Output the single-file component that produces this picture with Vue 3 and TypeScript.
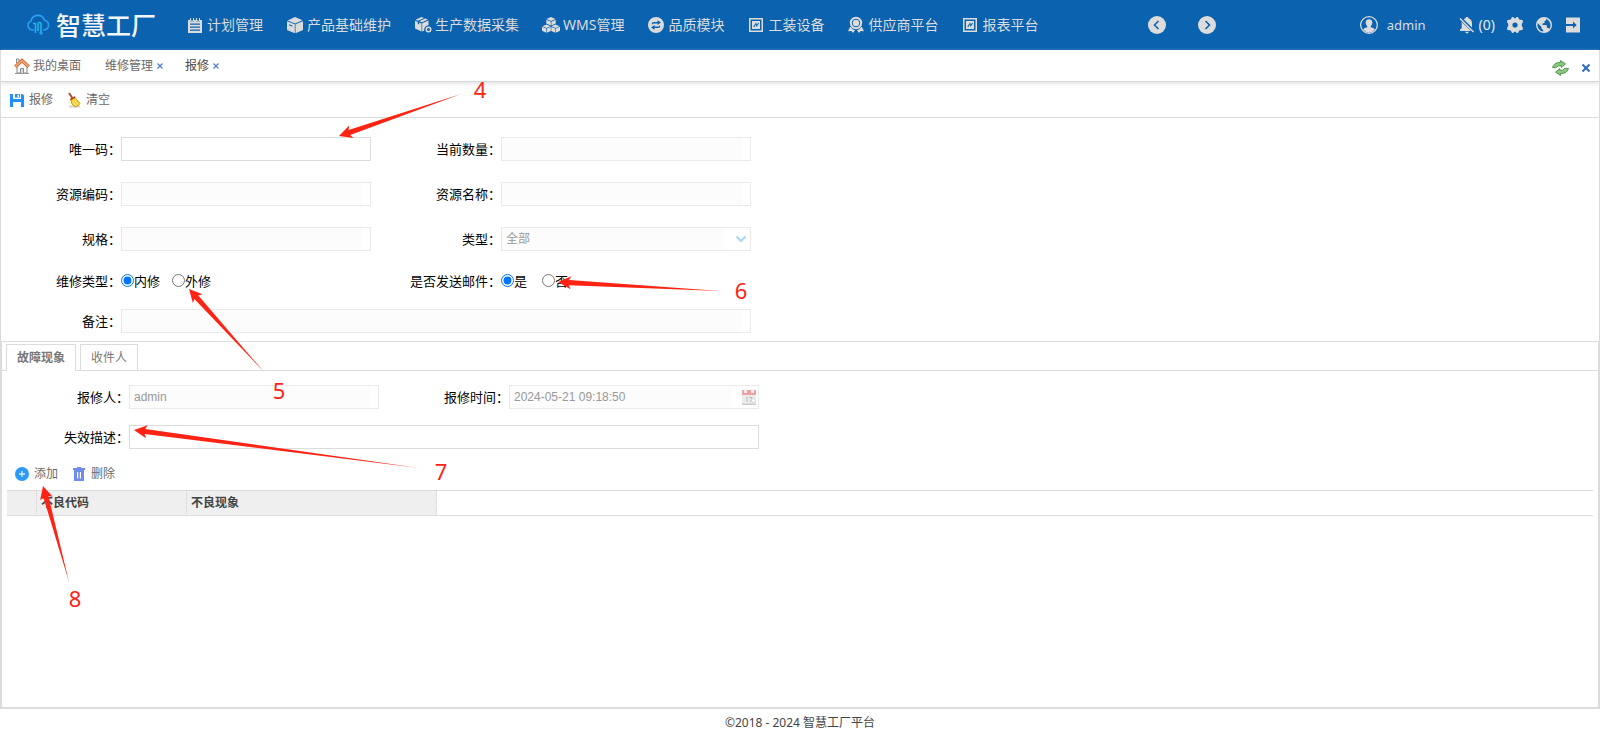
<script setup lang="ts">
import { ref } from 'vue'

interface NavItem { label: string; icon: string }

const frameIcon = 'M2 2H16V16H2ZM3.5 3.5V14.5H14.5V3.5ZM5 5H13V13H5ZM6.3 10.5L7.3 11.2L8.8 8.4L9.6 10.9L12 7.3L11.2 6.7L9.9 8.7L9.1 6.5Z'

const navItems: NavItem[] = [
  { label: '计划管理', icon: 'M2 4H4V5.5H5.5V4H6.5V5.5H8V4H10V5.5H11.5V4H12.5V5.5H14V4H16V17H2ZM4 7.5V8.7H14V7.5ZM4 10.5V11.7H14V10.5ZM4 13.5V14.7H14V13.5ZM4 2H5V5H4ZM7 2H8V5H7ZM10 2H11V5H10ZM13 2H14V5H13Z' },
  { label: '产品基础维护', icon: 'M9 1L16.5 4.3L9.2 7.5L1.5 4.5ZM1 5.2L8.8 8.2V17.3L1 13.9ZM9.5 8.2L17 5.2V13.9L9.5 17.3ZM3 8.3V9.3L6.3 10.7V9.6Z' },
  { label: '生产数据采集', icon: 'M7.5 1L10 2L4 4.8L1.5 3.7ZM11.2 2.4L14 3.6L8 6.3L5.2 5.3ZM1 4.8L3.8 6V8L5.2 8.6V6.5L7.5 7.5V15.5L1 12.6ZM8.2 7.3L14.5 4.6V9.3A4.5 4.5 0 0 0 10.2 14.7L8.2 15.6ZM14.5 10.5A3 3 0 1 1 14.5 16.5A3 3 0 1 1 14.5 10.5ZM14.5 12A1.5 1.5 0 1 0 14.5 15A1.5 1.5 0 1 0 14.5 12Z' },
  { label: 'WMS管理', icon: 'M9 1L13.5 3L9 5L4.5 3ZM4.3 3.7L8.8 5.7V9.5L4.3 7.4ZM9.4 5.7L13.7 3.7V7.4L9.4 9.5ZM4.5 8.4L8.5 10.2L4.5 12L.5 10.2ZM0 10.7L4.2 12.6V16.8L0 14.7ZM4.8 12.6L8.8 10.9V15L4.8 16.8ZM13.5 8.4L17.5 10.2L13.5 12L9.5 10.2ZM9.3 10.9L13.2 12.6V16.8L9.3 15ZM13.8 12.6L18 10.7V14.7L13.8 16.8Z' },
  { label: '品质模块', icon: 'M9 1A8 8 0 1 1 9 17A8 8 0 1 1 9 1ZM4.5 8.3H5.7Q6 7.4 7 7.4H10.5V9L14 6.6L10.5 4.3V6H7Q4.8 6.1 4.5 8.3ZM13.5 9.7H12.3Q12 10.6 11 10.6H7.5V9L4 11.4L7.5 13.7V12H11Q13.2 11.9 13.5 9.7Z' },
  { label: '工装设备', icon: frameIcon },
  { label: '供应商平台', icon: 'M9 .8A6.2 6.2 0 1 1 9 13.2A6.2 6.2 0 1 1 9 .8ZM9 2.8A4.2 4.2 0 1 0 9 11.2A4.2 4.2 0 1 0 9 2.8ZM9 3.8A3.2 3.2 0 1 1 9 10.2A3.2 3.2 0 1 1 9 3.8ZM3.3 10.5Q5 13.6 8 14.2L6 17L4.3 15.1L1 15.2ZM14.7 10.5Q13 13.6 10 14.2L12 17L13.7 15.1L17 15.2Z' },
  { label: '报表平台', icon: frameIcon },
]

const serial = ref('')
const failure = ref('')
const repairType = ref('inner')
const sendMail = ref('yes')

interface Mark { label: string; tip: [number, number]; tail: [number, number]; text: [number, number] }

const marks: Mark[] = [
  { label: '4', tip: [339, 136], tail: [461, 94], text: [480, 98] },
  { label: '5', tip: [189, 289], tail: [264, 372], text: [279, 399] },
  { label: '6', tip: [558, 282], tail: [720, 291], text: [741, 299] },
  { label: '7', tip: [134, 430], tail: [419, 468], text: [441, 480] },
  { label: '8', tip: [43, 486], tail: [69, 582], text: [75, 607] },
]

// Outline of an arrow: barbed head at the tip, body narrowing to a point at the tail.
function arrowPoints(m: Mark): string {
  const dx = m.tail[0] - m.tip[0]
  const dy = m.tail[1] - m.tip[1]
  const len = Math.hypot(dx, dy)
  const ux = dx / len
  const uy = dy / len
  const at = (along: number, side: number) =>
    `${(m.tip[0] + ux * along - uy * side).toFixed(1)},${(m.tip[1] + uy * along + ux * side).toFixed(1)}`
  return [at(0, 0), at(13, 6.5), at(11, 2.6), at(len, 0), at(11, -2.6), at(13, -6.5)].join(' ')
}
</script>

<template>
  <div class="page">
    <header class="topbar">
      <svg class="cloud" viewBox="0 0 24 22" fill="none" stroke="#2b9df4" stroke-width="1.6">
        <path d="M8 16H6A4.7 4.7 0 0 1 5 7A7 7 0 0 1 18.5 6.2A5 5 0 0 1 18.5 16H17" />
        <path d="M7 9.5H9.5V19M12 17V9.8Q12 8.5 13.5 8.5T15 9.8V18" stroke="#1fb4ea" />
        <circle cx="15" cy="19" r="1" />
      </svg>
      <h1>智慧工厂</h1>
      <nav>
        <a v-for="item in navItems" :key="item.label" href="#">
          <svg viewBox="0 0 18 18"><path :d="item.icon" fill-rule="evenodd" /></svg>{{ item.label }}
        </a>
      </nav>
      <div class="pager">
        <button type="button" aria-label="上一页">
          <svg viewBox="0 0 18 18"><circle cx="9" cy="9" r="9" /><path class="cut" d="M10.5 5L6.5 9L10.5 13" /></svg>
        </button>
        <button type="button" aria-label="下一页">
          <svg viewBox="0 0 18 18"><circle cx="9" cy="9" r="9" /><path class="cut" d="M7.5 5L11.5 9L7.5 13" /></svg>
        </button>
      </div>
      <div class="account">
        <a class="user" href="#">
          <svg viewBox="0 0 18 18">
            <path fill-rule="evenodd" d="M9 0A9 9 0 1 1 9 18A9 9 0 1 1 9 0ZM9 1.3A7.7 7.7 0 1 0 9 16.7A7.7 7.7 0 1 0 9 1.3Z" />
            <path d="M9 3.2C13.2 3.2 13 8 10.8 10.1V11.2C13 12 14.6 12.5 15 13.6Q12.4 16.7 9 16.7T3 13.6C3.4 12.5 5 12 7.2 11.2V10.1C5 8 4.8 3.2 9 3.2Z" />
          </svg>admin
        </a>
        <button class="bell" type="button">
          <svg viewBox="0 0 16 18">
            <path d="M4.7 3.3Q6 2.5 6.8 2.3V1H9.2V2.3Q13 3.2 13 7.5V11.5ZM2.7 6L12 15H1V13.8L2.7 12ZM6.3 15.7H9.7Q9.5 17.4 8 17.4T6.3 15.7ZM1.5 2L15 15.5L14 16.5L.5 3Z" />
          </svg>(0)
        </button>
        <button type="button" aria-label="设置">
          <svg viewBox="0 0 18 18"><path fill-rule="evenodd" d="M6 1H7.2L8.4 2.2H9.6L10.8 1H12L13 3.2L14.2 3.8L16.5 4L17 6L15.8 8V10L17 12L16.5 14L14.2 14.2L13 14.8L12 17H10.8L9.6 15.8H8.4L7.2 17H6L5 14.8L3.8 14.2L1.5 14L1 12L2.2 10V8L1 6L1.5 4L3.8 3.8L5 3.2ZM9 6.4A2.6 2.6 0 1 0 9 11.6A2.6 2.6 0 1 0 9 6.4Z" /></svg>
        </button>
        <button type="button" aria-label="语言">
          <svg viewBox="0 0 18 18"><path fill-rule="evenodd" d="M9 1A8 8 0 1 1 9 17A8 8 0 1 1 9 1ZM11 2.8V4Q11 5 9.5 5.2V7L7.5 7.4V9H11.5L12.2 12H13.6L14.2 13.2A6.7 6.7 0 0 0 11 2.8ZM2.8 7.2A6.6 6.6 0 0 0 8.2 15.6V14L6.5 12.7V11Z" /></svg>
        </button>
        <button type="button" aria-label="退出">
          <svg viewBox="0 0 18 18"><path fill-rule="evenodd" d="M2 1.5H16V16.5H2V10H9V12.5L12.7 9L9 5.5V8H2Z" /></svg>
        </button>
      </div>
    </header>

    <main class="workspace">
      <div class="window-tabs">
        <a class="home" href="#">
          <svg viewBox="0 0 16 16">
            <path d="M3 8V15H13V8L8 4Z" fill="#fafafa" stroke="#888" />
            <path d="M6.5 15V10.5H9.5V15" fill="#ddd" stroke="#888" />
            <path d="M2.5 5V1H5V3.5" fill="#eee" stroke="#888" />
            <path d="M1.3 8.7L8 2.5L14.7 8.7" fill="none" stroke="#c9622f" stroke-width="3.4" />
            <path d="M1.5 8.5L8 2.7L14.5 8.5" fill="none" stroke="#f6a56f" stroke-width="1.8" />
            <path d="M1 15.5H15" stroke="#999" />
          </svg>我的桌面
        </a>
        <div class="window-tab">
          <a href="#">维修管理</a>
          <button type="button" aria-label="关闭维修管理"><svg viewBox="0 0 6 6"><path d="M.5 .5L5.5 5.5M5.5 .5L.5 5.5" /></svg></button>
        </div>
        <div class="window-tab current">
          <a href="#">报修</a>
          <button type="button" aria-label="关闭报修"><svg viewBox="0 0 6 6"><path d="M.5 .5L5.5 5.5M5.5 .5L.5 5.5" /></svg></button>
        </div>
        <div class="window-tools">
          <button type="button" aria-label="刷新">
            <svg class="refresh" viewBox="0 0 17 16" fill="#8aca7e" stroke="#478c43" stroke-width=".9">
              <path d="M.6 7.6Q1.5 2.4 8.5 2.4V.6L13.5 3.9L9.2 7.4V5.6Q5 5.2 4.4 7.6Z" />
              <path d="M16.4 8.4Q15.5 13.6 8.5 13.6V15.4L3.5 12.1L7.8 8.6V10.4Q12 10.8 12.6 8.4Z" />
            </svg>
          </button>
          <button type="button" aria-label="关闭全部">
            <svg class="close-all" viewBox="0 0 8 8"><path d="M.5 .5L7.5 7.5M7.5 .5L.5 7.5" /></svg>
          </button>
        </div>
      </div>

      <div class="toolbar">
        <button type="button">
          <svg viewBox="0 0 14 14"><path fill="#1e90ff" fill-rule="evenodd" d="M0 1H3V6H11V1H12.5L14 2.5V14H11V9H3V14H0ZM5 1H10V4.5H5ZM7.5 1.5V4H9V1.5Z" /></svg>报修
        </button>
        <button type="button">
          <svg viewBox="0 0 14 16">
            <path d="M2 14.5H13" stroke="#d5d5d5" stroke-width="2" />
            <path d="M2 1L5.3 6" stroke="#a4572b" stroke-width="2" />
            <path d="M3.5 7L7.5 4.8L13 11.5Q12 14.2 7.5 14.8Q4 12.5 3.5 7Z" fill="#efd02c" stroke="#b99512" stroke-width=".8" />
            <path d="M3.4 7.6L8 5" stroke="#b53a2c" stroke-width="1.6" />
            <path d="M6 9L8.5 13.5M8 8L11 12.5" stroke="#fff08a" />
          </svg>清空
        </button>
      </div>

      <form class="fields ticket" @submit.prevent>
        <label for="serial">唯一码：</label>
        <input id="serial" v-model="serial" type="text">
        <label for="amount">当前数量：</label>
        <input id="amount" type="text" disabled>
        <label for="res-code">资源编码：</label>
        <input id="res-code" type="text" disabled>
        <label for="res-name">资源名称：</label>
        <input id="res-name" type="text" disabled>
        <label for="spec">规格：</label>
        <input id="spec" type="text" disabled>
        <label for="kind">类型：</label>
        <div class="with-icon">
          <select id="kind" disabled><option>全部</option></select>
          <svg class="chevron" viewBox="0 0 12 12"><path d="M1.5 3.5L6 8L10.5 3.5" /></svg>
        </div>
        <span id="repair-label" class="label">维修类型：</span>
        <div class="radios" role="radiogroup" aria-labelledby="repair-label">
          <label><input v-model="repairType" type="radio" name="repair" value="inner">内修</label>
          <label><input v-model="repairType" type="radio" name="repair" value="outer">外修</label>
        </div>
        <span id="mail-label" class="label">是否发送邮件：</span>
        <div class="radios wide-gap" role="radiogroup" aria-labelledby="mail-label">
          <label><input v-model="sendMail" type="radio" name="mail" value="yes">是</label>
          <label><input v-model="sendMail" type="radio" name="mail" value="no">否</label>
        </div>
        <label for="note">备注：</label>
        <input id="note" class="span" type="text" disabled>
      </form>

      <section class="details">
        <div class="tabs" role="tablist">
          <button type="button" role="tab" aria-selected="true">故障现象</button>
          <button type="button" role="tab" aria-selected="false">收件人</button>
        </div>
        <form class="fields report" @submit.prevent>
          <label for="reporter">报修人：</label>
          <input id="reporter" type="text" value="admin" disabled>
          <label for="time">报修时间：</label>
          <div class="with-icon">
            <input id="time" type="text" value="2024-05-21 09:18:50" disabled>
            <svg class="calendar" viewBox="0 0 14 16">
              <path d="M0 5H14V16H0Z" fill="#ececec" />
              <path d="M0 14.5H14V16H0Z" fill="#ccc" />
              <path d="M0 1H14V6H0Z" fill="#f0a0a0" />
              <path d="M2 0H5V4H2ZM9 0H12V4H9Z" fill="#eee" />
              <path d="M4 8.5L5 8V13M7 8.5H10L8.5 13" fill="none" stroke="#bbb" />
              <circle cx="11.5" cy="11.5" r="2" fill="#fff" stroke="#d5d5d5" />
            </svg>
          </div>
          <label for="failure">失效描述：</label>
          <input id="failure" v-model="failure" class="span" type="text">
        </form>
        <div class="toolbar row-tools">
          <button type="button">
            <svg viewBox="0 0 14 14"><circle cx="7" cy="7" r="7" fill="#2c9bf5" /><path d="M7 4V10M4 7H10" stroke="#d9eeff" stroke-width="1.3" /></svg>添加
          </button>
          <button type="button">
            <svg viewBox="0 0 14 14"><path fill="#6f8de8" fill-rule="evenodd" d="M5 0H9V1H13V3H12V14H2V3H1V1H5ZM5 5V11.5H6.2V5ZM7.8 5V11.5H9V5Z" /></svg>删除
          </button>
        </div>
        <table>
          <colgroup><col class="c-index"><col class="c-code"><col class="c-name"><col></colgroup>
          <thead><tr><th></th><th>不良代码</th><th>不良现象</th><td></td></tr></thead>
        </table>
      </section>
    </main>

    <footer>©2018 - 2024 智慧工厂平台</footer>

    <svg class="marks">
      <g v-for="m in marks" :key="m.label">
        <polygon :points="arrowPoints(m)" />
        <text :x="m.text[0]" :y="m.text[1]">{{ m.label }}</text>
      </g>
    </svg>
  </div>
</template>

<style>
body { background: #fff; }
</style>

<style scoped>
* { box-sizing: border-box; }
.page {
  position: relative;
  display: flex;
  flex-direction: column;
  min-height: 100vh;
  font: 12px/16px "Noto Sans", "Noto Sans CJK SC", sans-serif;
  color: #6a6a6a;
}
a { color: inherit; text-decoration: none; }
svg { flex: none; }
button {
  display: inline-flex;
  align-items: center;
  padding: 0;
  border: 0;
  background: none;
  color: inherit;
  font: inherit;
}

.topbar {
  display: flex;
  align-items: center;
  height: 50px;
  padding: 0 18px 0 26px;
  background: #0b62af;
  color: #dcdcdc;
  font-size: 14px;
  line-height: 20px;
  white-space: nowrap;
}
.topbar svg { width: 18px; height: 18px; fill: currentColor; }
.topbar .cloud { width: 24px; height: 22px; fill: none; }
.topbar .cut { fill: none; stroke: #0b62af; stroke-width: 1.6; }
h1 {
  margin: 0 30px 0 6px;
  font-size: 25px;
  font-weight: 500;
  line-height: 36px;
  color: #f2f6fb;
}
nav { display: flex; gap: 23px; }
nav a { display: flex; align-items: center; gap: 3px; }
.pager { display: flex; gap: 32px; margin-left: 110px; }
.account { display: flex; align-items: center; gap: 11px; margin-left: auto; }
.user { display: flex; align-items: center; gap: 9px; margin-right: 22px; font-size: 13px; }
.topbar .bell { gap: 4px; color: #e6edf5; }
.topbar .bell svg { width: 16px; fill: #dcdcdc; }

.workspace {
  flex: 1;
  display: flex;
  flex-direction: column;
  border: 1px solid #dcdcdc;
  border-top: 0;
}
.window-tabs {
  display: flex;
  align-items: center;
  height: 32px;
  padding: 0 9px 0 13px;
  border-bottom: 1px solid #d6d6d6;
  box-shadow: 0 2px 4px #e4e4e4;
}
.home { display: flex; align-items: center; gap: 3px; margin-right: 24px; }
.home svg { width: 16px; height: 16px; }
.window-tab { display: flex; align-items: center; gap: 4px; margin-right: 22px; }
.window-tab svg { width: 6px; height: 6px; }
.window-tab path { stroke: #4c7ec4; stroke-width: 1.2; }
.current { color: #4a4a4a; }
.window-tools { display: flex; align-items: center; gap: 13px; margin-left: auto; padding-top: 4px; }
.refresh { width: 17px; height: 16px; }
.close-all { width: 8px; height: 8px; }
.close-all path { stroke: #2d6bbf; stroke-width: 2; }

.toolbar { display: flex; align-items: center; gap: 14px; height: 36px; padding-left: 9px; border-bottom: 1px solid #dcdcdc; }
.toolbar button { gap: 5px; }
.toolbar svg { width: 14px; height: 16px; }

.fields {
  display: grid;
  grid-template-columns: 120px 250px 130px 250px;
  align-items: center;
  font-size: 13px;
  line-height: 18px;
  color: #000;
}
.ticket { grid-template-rows: 45px 45px 45px 39px 41px; padding-top: 8px; }
.fields > label, .label { text-align: right; white-space: nowrap; }
.fields input[type="text"], select {
  display: block;
  width: 100%;
  height: 24px;
  margin: 0;
  padding: 0 4px;
  border: 1px solid #dcdcdc;
  border-radius: 0;
  outline: 0;
  background: #fff;
  font: 12px/16px "Liberation Sans", "Noto Sans CJK SC", sans-serif;
  color: #333;
}
.fields input[type="text"]:disabled, select:disabled {
  border-color: #eaeaea;
  background: linear-gradient(#fcfcfc, #fcfcfc) 0 0 / calc(100% - 8px) 100% no-repeat #fff;
  color: #999;
  opacity: 1;
}
select { appearance: none; }
.fields .with-icon input:disabled, .fields select:disabled { background-size: calc(100% - 26px) 100%; }
.fields .span { grid-column: 2 / 5; }
.with-icon { position: relative; }
.chevron, .calendar { position: absolute; pointer-events: none; }
.chevron { top: 6px; right: 4px; width: 12px; height: 12px; fill: none; stroke: #a5d6f5; stroke-width: 2; }
.calendar { top: 4px; right: 3px; width: 14px; height: 16px; }
.radios { display: flex; gap: 12px; }
.wide-gap { gap: 15px; }
.radios label { display: flex; align-items: center; }
.radios input { width: 13px; height: 13px; margin: 0; }

.details {
  flex: 1;
  border: 1px solid #dcdcdc;
}
.tabs { display: flex; align-items: flex-end; gap: 4px; height: 29px; padding: 0 4px; border-bottom: 1px solid #dcdcdc; }
.tabs button { height: 26px; padding: 0 10px; border: 1px solid #dcdcdc; border-bottom: 0; background: #fff; color: #777; }
.tabs [aria-selected="true"] { height: 27px; margin-bottom: -1px; font-weight: 700; }
.report { grid-template-columns: 127px 250px 130px 250px; grid-template-rows: 40px 40px; padding-top: 6px; }
.row-tools { height: 33px; padding-left: 13px; border: 0; }
table {
  width: calc(100% - 10px);
  margin: 0 5px;
  border-collapse: separate;
  border-spacing: 0;
  table-layout: fixed;
}
.c-index { width: 30px; }
.c-code { width: 150px; }
.c-name { width: 250px; }
th, td { height: 26px; padding: 0 4px; border: 0 solid #dcdcdc; border-width: 1px 0; text-align: left; }
th { border-right: 1px dotted #d0d0d0; background: #efefef; color: #444; font-weight: 700; }
footer { height: 30px; padding-top: 6px; text-align: center; color: #444; }

.marks { position: absolute; top: 0; left: 0; width: 100%; height: 100%; pointer-events: none; fill: #ff2314; }
.marks text { font-size: 22px; text-anchor: middle; }
</style>
